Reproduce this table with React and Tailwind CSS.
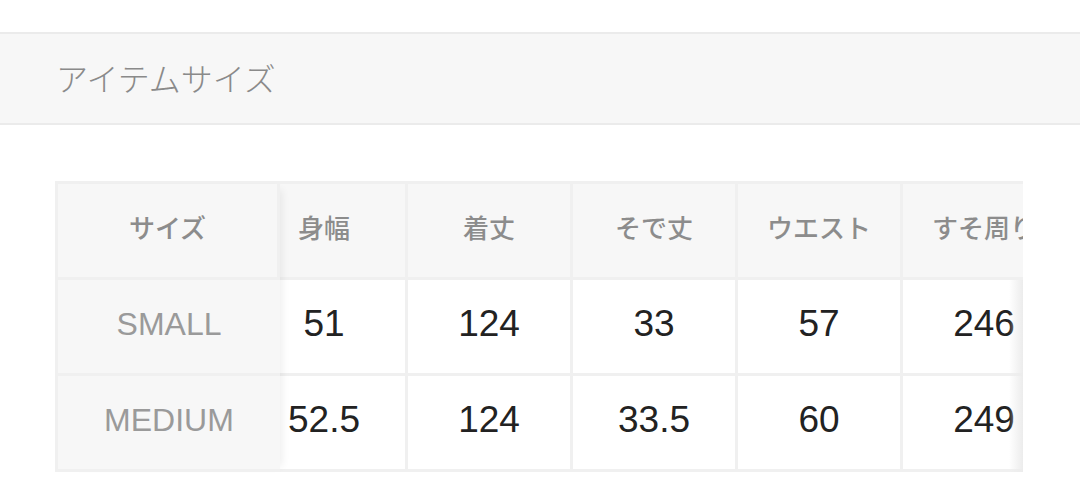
const cols = ["身幅", "着丈", "そで丈", "ウエスト", "すそ周り"];
const rows = [
  { name: "SMALL", values: ["51", "124", "33", "57", "246"] },
  { name: "MEDIUM", values: ["52.5", "124", "33.5", "60", "249"] },
];

const jp = { fontFamily: '"Noto Sans CJK JP", "Liberation Sans", sans-serif' };
const num = { fontFamily: '"Liberation Sans", Arial, sans-serif' };

export default function App() {
  return (
    <div className="w-[1080px] h-[481px] bg-white overflow-hidden pt-[32px]">
      {/* section title */}
      <div className="h-[93px] bg-[#f7f7f7] border-y-2 border-[#ebebeb] flex items-center pl-[56px] pb-[4px]">
        <h2 className="text-[32px] font-light text-[#8a8a8a] leading-none" style={jp}>
          アイテムサイズ
        </h2>
      </div>

      {/* size table */}
      <div className="relative mt-[56px] ml-[55px] w-[968px] flex border-t-[3px] border-l-[3px] border-[#f0f0f0]">
        <div className="relative z-10 w-[222px] shrink-0 shadow-[8px_0_8px_-6px_rgba(0,0,0,0.07)]">
          <div className="h-[96px] bg-[#f7f7f7] border-r-[3px] border-b-[3px] border-[#f0f0f0] flex items-center justify-center pb-[8px] text-[26px] font-medium text-[#8c8c8c] leading-none" style={jp}>
            サイズ
          </div>
          {rows.map((r) => (
            <div key={r.name} className="h-[96px] bg-[#f7f7f7] border-b-[3px] border-[#f0f0f0] flex items-center justify-center pb-[6px] text-[32px] text-[#9a9a9a] leading-none" style={num}>
              {r.name}
            </div>
          ))}
        </div>

        <div className="flex-1 overflow-hidden">
          <div className="flex ml-[-37px]">
            {cols.map((c, i) => (
              <div key={c} className="w-[165px] shrink-0">
                <div className="h-[96px] bg-[#f7f7f7] border-r-[3px] border-b-[3px] border-[#f0f0f0] flex items-center justify-center pb-[8px] text-[26px] font-medium text-[#8c8c8c] leading-none whitespace-nowrap" style={jp}>
                  {c}
                </div>
                {rows.map((r) => (
                  <div key={r.name} className="h-[96px] bg-white border-r-[3px] border-b-[3px] border-[#f0f0f0] flex items-center justify-center pb-[6px] text-[37px] text-[#222] leading-none" style={num}>
                    {r.values[i]}
                  </div>
                ))}
              </div>
            ))}
          </div>
        </div>

        {/* scroll hint on right edge */}
        <div className="absolute right-0 top-[96px] bottom-0 w-[14px] bg-gradient-to-l from-[#ececec] to-transparent" />
      </div>
    </div>
  );
}
